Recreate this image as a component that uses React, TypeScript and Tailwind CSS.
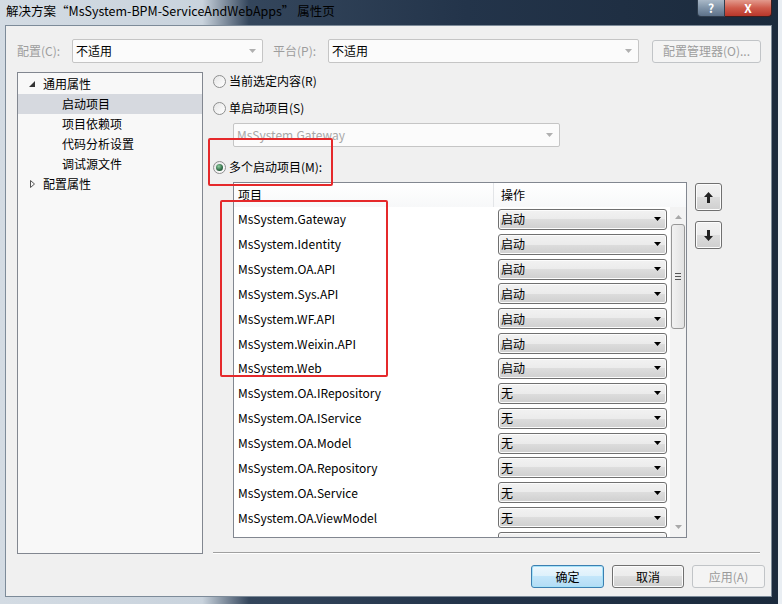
import type { ReactNode } from "react";

const font = "font-['Microsoft_YaHei','Noto_Sans_CJK_SC','Noto_Sans',sans-serif]";

const projects = [
  { name: "MsSystem.Gateway", action: "启动" },
  { name: "MsSystem.Identity", action: "启动" },
  { name: "MsSystem.OA.API", action: "启动" },
  { name: "MsSystem.Sys.API", action: "启动" },
  { name: "MsSystem.WF.API", action: "启动" },
  { name: "MsSystem.Weixin.API", action: "启动" },
  { name: "MsSystem.Web", action: "启动" },
  { name: "MsSystem.OA.IRepository", action: "无" },
  { name: "MsSystem.OA.IService", action: "无" },
  { name: "MsSystem.OA.Model", action: "无" },
  { name: "MsSystem.OA.Repository", action: "无" },
  { name: "MsSystem.OA.Service", action: "无" },
  { name: "MsSystem.OA.ViewModel", action: "无" },
  // next row is scrolled below the edge; only the top of its combo shows
  { name: "", action: "" },
];

const treeItems = ["启动项目", "项目依赖项", "代码分析设置", "调试源文件"];

function Caret({ color = "#000" }: { color?: string }) {
  return (
    <svg width="7" height="4" viewBox="0 0 7 4">
      <path d="M0 0h7L3.5 4z" fill={color} />
    </svg>
  );
}

function Radio({ checked, label }: { checked?: boolean; label: string }) {
  return (
    <div className="flex h-[20px] items-center gap-[3px]">
      <span className="flex h-[13px] w-[13px] items-center justify-center rounded-full border border-[#8e8f8f] bg-[linear-gradient(135deg,#e6e6e6,#ffffff)]">
        {checked ? (
          <span className="h-[7px] w-[7px] rounded-full bg-[radial-gradient(circle_at_40%_35%,#8fd0a0,#2f6a45_60%,#1c3f2a)]" />
        ) : null}
      </span>
      <span className="leading-none">{label}</span>
    </div>
  );
}

function DisabledCombo({ text, className }: { text: string; className: string }) {
  return (
    <div
      className={`flex h-[24px] items-center justify-between rounded-[2px] border border-[#c5c5c5] bg-[#fbfbfb] pl-[3px] pr-[6px] ${className}`}
    >
      <span className="leading-none">{text}</span>
      <Caret color="#b0b0b0" />
    </div>
  );
}

function Button({
  children,
  kind = "normal",
  className = "",
}: {
  children: ReactNode;
  kind?: "normal" | "default" | "disabled";
  className?: string;
}) {
  const look =
    kind === "default"
      ? "border-[#3c7fb1] bg-[linear-gradient(#edf7fd,#dcf0fb_50%,#c3e6fa_50%,#b3dcf5)] shadow-[inset_0_0_0_1px_#a6e2f8]"
      : kind === "disabled"
        ? "border-[#c1c4c7] bg-[#f4f4f4] text-[#9a9a9a]"
        : "border-[#707070] bg-[linear-gradient(#f2f2f2,#ebebeb_50%,#dddddd_50%,#cfcfcf)] shadow-[inset_0_0_0_1px_#fcfcfc]";
  return (
    <div
      className={`flex items-center justify-center rounded-[3px] border leading-none ${look} ${className}`}
    >
      {children}
    </div>
  );
}

function RowCombo({ text }: { text: string }) {
  return (
    <div className="flex h-[21px] w-[169px] items-center justify-between rounded-[3px] border border-[#707070] bg-[linear-gradient(#f2f2f2,#ebebeb_50%,#dddddd_50%,#cfcfcf)] pl-[2px] pr-[5px] shadow-[inset_0_0_0_1px_#fcfcfc]">
      <span className="leading-none">{text}</span>
      <Caret />
    </div>
  );
}

function ArrowButton({ up }: { up?: boolean }) {
  return (
    <Button className="h-[28px] w-[27px]">
      <svg width="9" height="11" viewBox="0 0 9 11">
        {up ? (
          <path d="M4.5 0L0 5h3v6h3V5h3z" fill="#222" />
        ) : (
          <path d="M4.5 11L0 6h3V0h3v6h3z" fill="#222" />
        )}
      </svg>
    </Button>
  );
}

function Scrollbar() {
  return (
    <div className="flex w-[16px] flex-col items-center bg-[#f3f3f3]">
      <div className="flex h-[17px] items-center justify-center pt-[2px]">
        <svg width="7" height="4" viewBox="0 0 7 4">
          <path d="M3.5 0L7 4H0z" fill="#a8a8a8" />
        </svg>
      </div>
      <div className="flex h-[105px] w-[14px] flex-col items-center justify-center gap-[2px] rounded-[3px] border border-[#979797] bg-[linear-gradient(90deg,#f2f2f2,#e2e2e2)]">
        <span className="h-px w-[6px] bg-[#555]" />
        <span className="h-px w-[6px] bg-[#555]" />
        <span className="h-px w-[6px] bg-[#555]" />
      </div>
      <div className="flex-1" />
      <div className="flex h-[17px] items-center justify-center pb-[4px]">
        <svg width="7" height="4" viewBox="0 0 7 4">
          <path d="M0 0h7L3.5 4z" fill="#a8a8a8" />
        </svg>
      </div>
    </div>
  );
}

export default function App() {
  return (
    <div
      className={`relative flex h-[604px] w-[782px] overflow-hidden text-[12px] text-black ${font}`}
    >
      <div className="flex w-[778px] flex-col bg-[linear-gradient(90deg,#d3dbe3,#c9d3dd_26%,#34465c_32%,#23344a_60%,#1b2a3c)]">
        {/* title bar */}
        <div className="flex h-[25px] items-start justify-between pl-[6px] pr-[6px]">
          <span className="pt-[5px] text-[12.5px] leading-none">
            解决方案“MsSystem-BPM-ServiceAndWebApps” 属性页
          </span>
          <div className="flex h-[17px]">
            <div className="flex w-[28px] items-center justify-center rounded-bl-[4px] border border-t-0 border-[#2f3d4d] bg-[linear-gradient(#a9b8c7,#7f93a8_50%,#5d7189)] text-[12px] font-bold leading-none text-white">
              ?
            </div>
            <div className="flex w-[47px] items-center justify-center rounded-br-[4px] border border-l-0 border-t-0 border-[#3d1f1f] bg-[linear-gradient(#e39a8d,#cf5b4b_50%,#b8372a)] text-[12px] font-bold leading-none text-white">
              X
            </div>
          </div>
        </div>

        {/* client area */}
        <div className="flex flex-1 pb-[7px] pl-[5px] pr-[6px]">
          <div className="flex flex-1 flex-col border border-[#7d8b99] bg-[#f0f0f0] pb-[7px] pl-[11px] pr-[6px] pt-[13px]">
            {/* config row */}
            <div className="flex h-[24px] items-center">
              <span className="w-[55px] leading-none text-[#9d9d9d]">配置(C):</span>
              <DisabledCombo text="不适用" className="w-[191px]" />
              <span className="ml-[10px] w-[55px] leading-none text-[#9d9d9d]">平台(P):</span>
              <DisabledCombo text="不适用" className="w-[311px]" />
              <Button kind="disabled" className="ml-[13px] h-[23px] w-[109px] text-[#9d9d9d]">
                配置管理器(O)...
              </Button>
            </div>

            {/* main */}
            <div className="mt-[9px] flex h-[482px]">
              <div className="flex w-[186px] flex-col border border-[#828790] bg-[#f8f8f8] pt-[1px]">
                <div className="flex h-[20px] items-center pl-[11px]">
                  <svg width="6" height="6" viewBox="0 0 6 6">
                    <path d="M6 0v6H0z" fill="#333" />
                  </svg>
                  <span className="ml-[8px] leading-none">通用属性</span>
                </div>
                {treeItems.map((t, i) => (
                  <div
                    key={t}
                    className={`flex h-[20px] items-center pl-[44px] leading-none ${
                      i === 0 ? "bg-[#d6d9df]" : ""
                    }`}
                  >
                    {t}
                  </div>
                ))}
                <div className="flex h-[20px] items-center pl-[12px]">
                  <svg width="5" height="8" viewBox="0 0 5 8">
                    <path d="M0.5 0.5L4.5 4L0.5 7.5z" fill="none" stroke="#555" />
                  </svg>
                  <span className="ml-[8px] leading-none">配置属性</span>
                </div>
              </div>

              <div className="ml-[10px] flex flex-1 flex-col">
                <div className="-mt-[1px]">
                  <Radio label="当前选定内容(R)" />
                </div>
                <div className="mt-[7px]">
                  <Radio label="单启动项目(S)" />
                </div>
                <DisabledCombo
                  text="MsSystem.Gateway"
                  className="ml-[20px] mt-[5px] w-[327px] text-[#a8a8a8]"
                />
                <div className="mt-[10px]">
                  <Radio checked label="多个启动项目(M):" />
                </div>

                <div className="mt-[5px] flex">
                  <div className="ml-[20px] flex h-[356px] w-[454px] flex-col overflow-hidden border border-[#828790] bg-white">
                    <div className="flex h-[24px] shrink-0 items-center bg-[linear-gradient(#ffffff,#f7f8f9)]">
                      <div className="flex h-full w-[260px] items-center border-r border-[#e3e5e8] pl-[4px] leading-none">
                        项目
                      </div>
                      <div className="pl-[7px] leading-none">操作</div>
                    </div>
                    <div className="flex flex-1 overflow-hidden">
                      <div className="flex flex-1 flex-col">
                        {projects.map((p, i) => (
                          <div key={i} className="flex h-[24.85px] shrink-0 items-center">
                            <span className="w-[260px] pl-[4px] leading-none">{p.name}</span>
                            <div className="pl-[4px]">
                              <RowCombo text={p.action} />
                            </div>
                          </div>
                        ))}
                      </div>
                      <Scrollbar />
                    </div>
                  </div>
                  <div className="ml-[8px] flex flex-col gap-[10px] pt-[1px]">
                    <ArrowButton up />
                    <ArrowButton />
                  </div>
                </div>

                <div className="flex-1" />
                <div className="mr-[5px] h-[2px] border-b border-t border-b-white border-t-[#a0a0a0]" />
              </div>
            </div>

            {/* bottom buttons */}
            <div className="mt-[11px] flex justify-end gap-[8px]">
              <Button kind="default" className="h-[23px] w-[73px]">
                确定
              </Button>
              <Button className="h-[23px] w-[72px]">取消</Button>
              <Button kind="disabled" className="h-[23px] w-[73px]">
                应用(A)
              </Button>
            </div>
          </div>
        </div>
      </div>
      <div className="w-[4px] bg-[#e9eef3]" />

      {/* annotation boxes */}
      <div className="absolute left-[208px] top-[138px] h-[48px] w-[125px] rounded-[2px] border-2 border-[#e5292b]" />
      <div className="absolute left-[220px] top-[200px] h-[177px] w-[168px] rounded-[2px] border-2 border-[#e5292b]" />
    </div>
  );
}
